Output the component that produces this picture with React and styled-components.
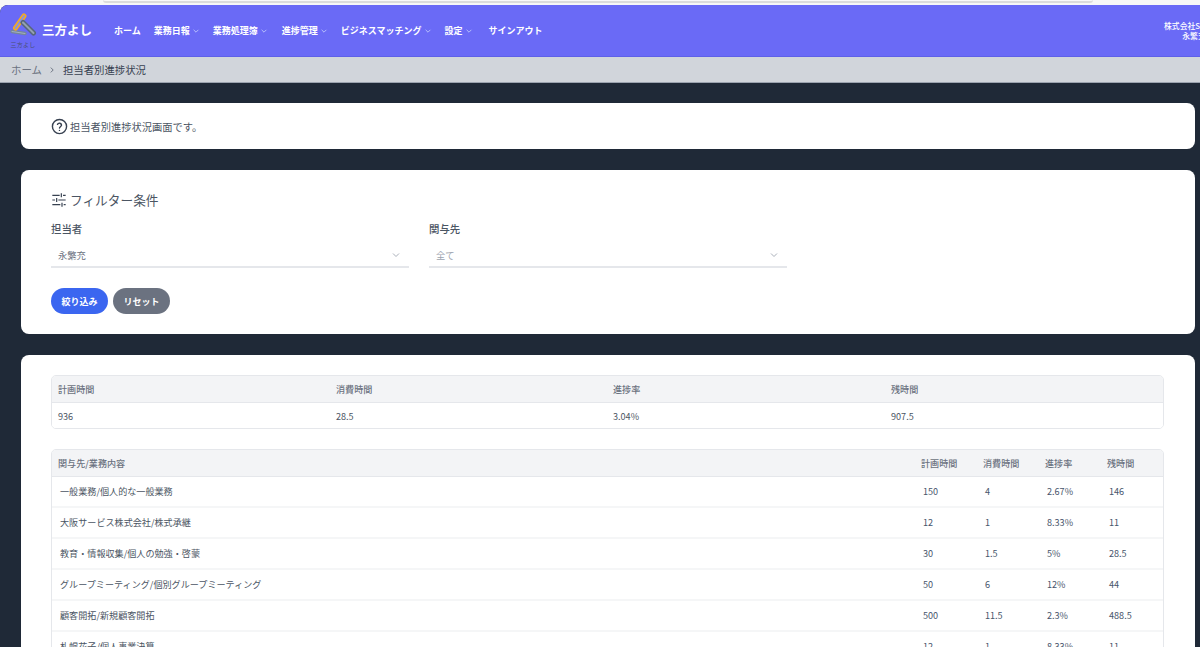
import React from 'react';
import styled, { createGlobalStyle } from 'styled-components';

const GlobalStyle = createGlobalStyle`
  html, body { margin: 0; padding: 0; background: #f7f7f7; }
  body { font-family: "Noto Sans CJK JP", "Noto Sans", sans-serif; overflow: hidden; }
  #root { width: 1200px; height: 647px; overflow: hidden; }
`;

const TopStrip = styled.div`
  height: 5px;
  box-sizing: border-box;
  padding-left: 103px;
  background: #f7f7f7;
`;

const ScrollThumb = styled.div`
  width: 990px;
  height: 3px;
  box-sizing: border-box;
  background: #f9f9f9;
  border-bottom: 2px solid #dcdcdc;
  border-radius: 0 0 3px 3px;
`;

const Shell = styled.div`
  width: 1200px;
  height: 642px;
  background: #1f2937;
  border-radius: 8px 0 0 0;
  overflow: hidden;
`;

const Header = styled.header`
  width: 1234px;
  height: 52px;
  box-sizing: border-box;
  background: #6a6af6;
  border-bottom: 1px solid #5e60e8;
  display: flex;
  align-items: center;
  padding-left: 10px;
  color: #ffffff;
`;

const Brand = styled.div`
  display: flex;
  align-items: center;
  gap: 6px;
  width: 104px;
`;

const LogoBox = styled.div`
  display: flex;
  flex-direction: column;
  align-items: center;
  width: 26px;
  margin-top: 1px;
  svg { display: block; }
`;

const LogoCaption = styled.span`
  font-size: 6px;
  line-height: 9px;
  letter-spacing: 0.3px;
  margin-top: 3px;
  color: #4b5078;
  white-space: nowrap;
`;

const BrandName = styled.span`
  font-size: 12.5px;
  font-weight: 700;
  margin-top: -2px;
`;

const Nav = styled.nav`
  display: flex;
  align-items: center;
  gap: 13px;
`;

const NavItem = styled.span`
  display: flex;
  align-items: center;
  gap: 2px;
  font-size: 9px;
  font-weight: 700;
  white-space: nowrap;
  margin-right: ${p => p.$extra || 0}px;
`;

const Account = styled.div`
  margin-left: auto;
  width: 80px;
  text-align: center;
  font-size: 7.8px;
  font-weight: 500;
  line-height: 10.5px;
  margin-top: 1px;
  white-space: nowrap;
`;

const Crumbs = styled.div`
  height: 26px;
  box-sizing: border-box;
  background: #d1d5db;
  border-bottom: 1px solid #9ca3af;
  padding-left: 11px;
  display: flex;
  align-items: center;
  font-size: 10.4px;
  color: #374151;
`;

const CrumbHome = styled.span`
  color: #6b7280;
`;

const CrumbSep = styled.span`
  display: flex;
  margin: 0 7px 0 6px;
`;

const Main = styled.main`
  padding: 20px 5px 0 21px;
  display: flex;
  flex-direction: column;
  gap: 21px;
`;

const Card = styled.section`
  background: #ffffff;
  border-radius: 8px;
  padding: 20px 30px;
`;

const Notice = styled.section`
  display: flex;
  align-items: center;
  gap: 2px;
  height: 46px;
  padding-left: 30px;
  background: #ffffff;
  border-radius: 8px;
  font-size: 10.25px;
  color: #4b5563;
`;

const FilterTitle = styled.h2`
  margin: 0 0 12px;
  display: flex;
  align-items: center;
  gap: 3px;
  font-size: 12.7px;
  line-height: 20px;
  font-weight: 400;
  color: #4b5563;
`;

const FilterRow = styled.div`
  display: flex;
  gap: 20px;
`;

const Field = styled.div`
  width: 358px;
`;

const FieldLabel = styled.div`
  font-size: 10.4px;
  line-height: 14px;
  font-weight: 500;
  color: #4b5563;
  margin-bottom: 7px;
`;

const SelectBox = styled.div`
  height: 25px;
  box-sizing: border-box;
  border-bottom: 2px solid #e5e7eb;
  padding: 0 8px 0 7px;
  display: flex;
  align-items: center;
  justify-content: space-between;
  font-size: 9.3px;
  color: ${p => (p.$muted ? '#9ca3af' : '#6b7280')};
`;

const Buttons = styled.div`
  display: flex;
  gap: 5px;
  margin-top: 20px;
`;

const PillButton = styled.button`
  width: 57px;
  height: 26px;
  padding: 0;
  border: 0;
  border-radius: 13px;
  background: ${p => p.$bg};
  color: #ffffff;
  font-family: inherit;
  font-size: 9px;
  font-weight: 700;
`;

const TableBox = styled.div`
  width: 1111px;
  border: 1px solid #e5e7eb;
  border-radius: 5px;
  overflow: hidden;
  margin-bottom: 20px;
  font-size: 9.1px;
  color: #4b5563;
`;

const SummaryRow = styled.div`
  display: grid;
  grid-template-columns: 278px 277px 278px 1fr;
  align-items: center;
  height: ${p => (p.$head ? '26px' : '25px')};
  padding-left: 6px;
  background: ${p => (p.$head ? '#f3f4f6' : '#ffffff')};
  border-bottom: ${p => (p.$head ? '1px solid #e5e7eb' : '0')};
  color: ${p => (p.$head ? '#6b7280' : '#4b5563')};
  font-weight: ${p => (p.$head ? 500 : 400)};
`;

const DetailHead = styled.div`
  display: grid;
  grid-template-columns: 863px 62px 62px 62px 1fr;
  align-items: center;
  height: 26px;
  padding-left: 6px;
  background: #f3f4f6;
  border-bottom: 1px solid #e5e7eb;
  color: #6b7280;
  font-weight: 500;
`;

const DetailRow = styled.div`
  display: grid;
  grid-template-columns: 863px 62px 62px 62px 1fr;
  align-items: center;
  height: 28px;
  padding: 0 0 1px 8px;
  border-bottom: 2px solid #f5f6f7;
  color: #4b5563;
`;

const NumCell = styled.span`
  color: #47556b;
`;

const Chevron = ({ color = '#c7d2fe', size = 8 }) => (
  <svg width={size} height={size} viewBox="0 0 10 10" fill="none" stroke={color} strokeWidth="1">
    <path d="M2 3.5 L5 6.5 L8 3.5" />
  </svg>
);

const Logo = () => (
  <svg width="26" height="24" viewBox="0 0 26 24" fill="none" strokeLinecap="round">
    <path d="M2 18.5 L15 20.5" stroke="#75869a" strokeWidth="3.5" />
    <path d="M2 18.5 L15 20.5" stroke="#a3afc0" strokeWidth="1" />
    <path d="M14 3 L5.5 15" stroke="#f4a922" strokeWidth="5" />
    <path d="M14 3 L5.5 15" stroke="#8c93d8" strokeWidth="2" />
    <path d="M13 9.5 L23.5 20" stroke="#56657a" strokeWidth="5" />
    <path d="M13 9.5 L23.5 20" stroke="#94a0b0" strokeWidth="2" />
  </svg>
);

const HelpIcon = () => (
  <svg width="17" height="17" viewBox="0 0 24 24" fill="none" stroke="#374151" strokeWidth="2" strokeLinecap="round">
    <circle cx="12" cy="12" r="10" />
    <path d="M9.2 9a3 3 0 0 1 5.7 1c0 2-2.9 2.6-2.9 4" />
    <path d="M12 17.5h.01" />
  </svg>
);

const FilterIcon = () => (
  <svg width="16" height="16" viewBox="0 0 24 24" fill="none" stroke="#374151" strokeWidth="1.8">
    <path d="M2 5h11M18 5h4M15.5 2v6M2 12h4M11 12h11M8.5 9v6M2 19h12M19 19h3M16.5 16v6" />
  </svg>
);

const navItems = [
  { label: 'ホーム' },
  { label: '業務日報', menu: true },
  { label: '業務処理簿', menu: true, extra: 1 },
  { label: '進捗管理', menu: true },
  { label: 'ビジネスマッチング', menu: true },
  { label: '設定', menu: true, extra: 3 },
  { label: 'サインアウト' },
];

const rows = [
  ['一般業務/個人的な一般業務', '150', '4', '2.67%', '146'],
  ['大阪サービス株式会社/株式承継', '12', '1', '8.33%', '11'],
  ['教育・情報収集/個人の勉強・啓蒙', '30', '1.5', '5%', '28.5'],
  ['グループミーティング/個別グループミーティング', '50', '6', '12%', '44'],
  ['顧客開拓/新規顧客開拓', '500', '11.5', '2.3%', '488.5'],
  ['札幌花子/個人事業決算', '12', '1', '8.33%', '11'],
];

export default function App() {
  return (
    <>
      <GlobalStyle />
      <TopStrip><ScrollThumb /></TopStrip>
      <Shell>
        <Header>
          <Brand>
            <LogoBox>
              <Logo />
              <LogoCaption>三方よし</LogoCaption>
            </LogoBox>
            <BrandName>三方よし</BrandName>
          </Brand>
          <Nav>
            {navItems.map(item => (
              <NavItem key={item.label} $extra={item.extra}>
                {item.label}
                {item.menu && <Chevron />}
              </NavItem>
            ))}
          </Nav>
          <Account>
            <div>株式会社STAGES</div>
            <div>永繁充</div>
          </Account>
        </Header>
        <Crumbs>
          <CrumbHome>ホーム</CrumbHome>
          <CrumbSep>
            <svg width="8" height="8" viewBox="0 0 10 10" fill="none" stroke="#6b7280" strokeWidth="1.2">
              <path d="M3.5 2 L6.5 5 L3.5 8" />
            </svg>
          </CrumbSep>
          担当者別進捗状況
        </Crumbs>
        <Main>
          <Notice>
            <HelpIcon />
            担当者別進捗状況画面です。
          </Notice>
          <Card>
            <FilterTitle>
              <FilterIcon />
              フィルター条件
            </FilterTitle>
            <FilterRow>
              <Field>
                <FieldLabel>担当者</FieldLabel>
                <SelectBox>永繁充<Chevron color="#a9afb9" size={10} /></SelectBox>
              </Field>
              <Field>
                <FieldLabel>関与先</FieldLabel>
                <SelectBox $muted>全て<Chevron color="#a9afb9" size={10} /></SelectBox>
              </Field>
            </FilterRow>
            <Buttons>
              <PillButton $bg="#3b66f0">絞り込み</PillButton>
              <PillButton $bg="#6b7280">リセット</PillButton>
            </Buttons>
          </Card>
          <Card>
            <TableBox>
              <SummaryRow $head>
                <span>計画時間</span>
                <span>消費時間</span>
                <span>進捗率</span>
                <span>残時間</span>
              </SummaryRow>
              <SummaryRow>
                <span>936</span>
                <span>28.5</span>
                <span>3.04%</span>
                <span>907.5</span>
              </SummaryRow>
            </TableBox>
            <TableBox>
              <DetailHead>
                <span>関与先/業務内容</span>
                <span>計画時間</span>
                <span>消費時間</span>
                <span>進捗率</span>
                <span>残時間</span>
              </DetailHead>
              {rows.map(row => (
                <DetailRow key={row[0]}>
                  <span>{row[0]}</span>
                  <NumCell>{row[1]}</NumCell>
                  <NumCell>{row[2]}</NumCell>
                  <NumCell>{row[3]}</NumCell>
                  <NumCell>{row[4]}</NumCell>
                </DetailRow>
              ))}
            </TableBox>
          </Card>
        </Main>
      </Shell>
    </>
  );
}
